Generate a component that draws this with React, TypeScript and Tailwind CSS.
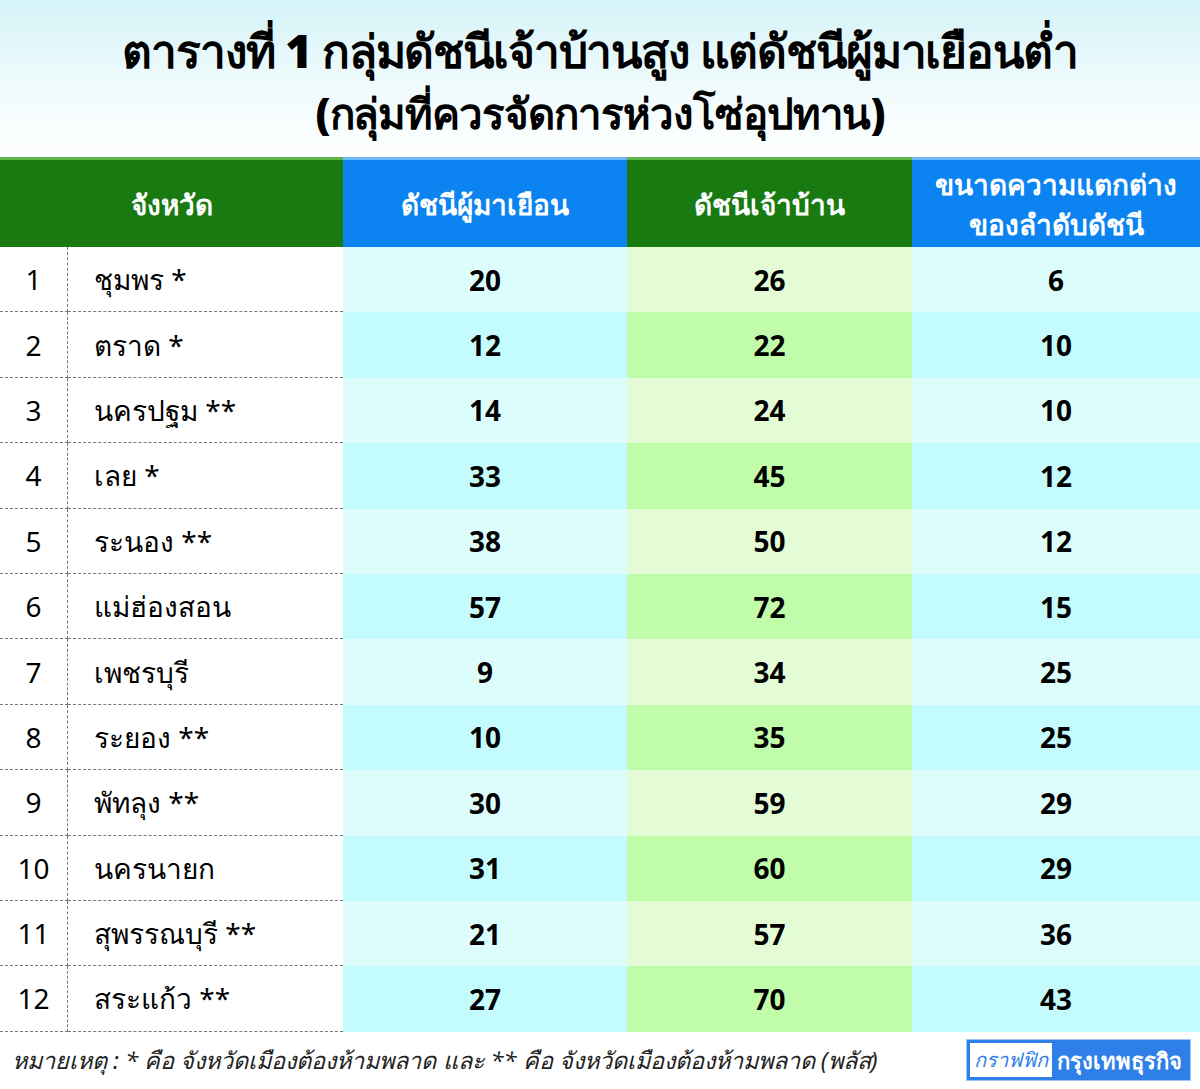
import React from 'react'

const rows = [
    { n: 1, name: 'ชุมพร *', visitor: 20, host: 26, gap: 6 },
    { n: 2, name: 'ตราด *', visitor: 12, host: 22, gap: 10 },
    { n: 3, name: 'นครปฐม **', visitor: 14, host: 24, gap: 10 },
    { n: 4, name: 'เลย *', visitor: 33, host: 45, gap: 12 },
    { n: 5, name: 'ระนอง **', visitor: 38, host: 50, gap: 12 },
    { n: 6, name: 'แม่ฮ่องสอน', visitor: 57, host: 72, gap: 15 },
    { n: 7, name: 'เพชรบุรี', visitor: 9, host: 34, gap: 25 },
    { n: 8, name: 'ระยอง **', visitor: 10, host: 35, gap: 25 },
    { n: 9, name: 'พัทลุง **', visitor: 30, host: 59, gap: 29 },
    { n: 10, name: 'นครนายก', visitor: 31, host: 60, gap: 29 },
    { n: 11, name: 'สุพรรณบุรี **', visitor: 21, host: 57, gap: 36 },
    { n: 12, name: 'สระแก้ว **', visitor: 27, host: 70, gap: 43 },
]

const font = { fontFamily: '"Noto Sans", "Liberation Sans", sans-serif' }

export default function App() {
    return (
        <div className="w-[1200px] h-[1089px] bg-white flex flex-col text-black" style={font}>
            {/* title block */}
            <header className="h-[157px] pt-[4px] flex flex-col items-center justify-center bg-gradient-to-b from-[#d4f3f8] via-[#eefafc] to-white">
                <h1 className="text-[46px] leading-[64px] font-black tracking-tight">ตารางที่ 1 กลุ่มดัชนีเจ้าบ้านสูง แต่ดัชนีผู้มาเยือนต่ำ</h1>
                <h2 className="text-[42px] leading-[62px] font-black tracking-tight">(กลุ่มที่ควรจัดการห่วงโซ่อุปทาน)</h2>
            </header>

            <div className="grid grid-cols-[343px_284px_285px_288px] h-[90px] text-white text-[28px] leading-[40px] font-bold text-center">
                <div className="bg-[#1a7a12] border-t-[3px] border-[#5fb34a] flex items-center justify-center">จังหวัด</div>
                <div className="bg-[#0b84f2] border-t-[3px] border-[#6ab8f7] flex items-center justify-center">ดัชนีผู้มาเยือน</div>
                <div className="bg-[#1a7a12] border-t-[3px] border-[#5fb34a] flex items-center justify-center">ดัชนีเจ้าบ้าน</div>
                <div className="bg-[#0b84f2] border-t-[3px] border-[#6ab8f7] flex flex-col items-center justify-center">
                    <span>ขนาดความแตกต่าง</span>
                    <span>ของลำดับดัชนี</span>
                </div>
            </div>

            <div className="flex flex-col">
                {rows.map((r, i) => {
                    const odd = i % 2 === 0
                    return (
                        <div key={r.n} className="grid grid-cols-[68px_275px_284px_285px_288px] h-[65.4px] text-[28px]">
                            <div className="flex items-center justify-center border-r border-b border-dashed border-[#777]">{r.n}</div>
                            <div className="flex items-center pl-[26px] border-b border-dashed border-[#777]">{r.name}</div>
                            <div className={`flex items-center justify-center font-bold ${odd ? 'bg-[#ddfcfc]' : 'bg-[#c4fbfd]'}`}>{r.visitor}</div>
                            <div className={`flex items-center justify-center font-bold ${odd ? 'bg-[#e3fcd6]' : 'bg-[#c0fcaa]'}`}>{r.host}</div>
                            <div className={`flex items-center justify-center font-bold ${odd ? 'bg-[#ddfcfc]' : 'bg-[#c4fbfd]'}`}>{r.gap}</div>
                        </div>
                    )
                })}
            </div>

            <footer className="flex-1 flex items-center justify-between pl-[12px] pr-[10px]">
                <p className="italic text-[23.5px] text-[#222]">หมายเหตุ : * คือ จังหวัดเมืองต้องห้ามพลาด และ ** คือ จังหวัดเมืองต้องห้ามพลาด (พลัส)</p>
                <div className="flex items-center bg-[#2f7fe8] p-[3px] h-[40px] outline outline-1 outline-[#9cc4f4]">
                    <span className="bg-white text-[#2f7fe8] italic text-[20px] px-[4px] h-full flex items-center">กราฟฟิก</span>
                    <span className="text-white text-[22px] font-semibold px-[5px] flex items-center">กรุงเทพธุรกิจ</span>
                </div>
            </footer>
        </div>
    )
}
